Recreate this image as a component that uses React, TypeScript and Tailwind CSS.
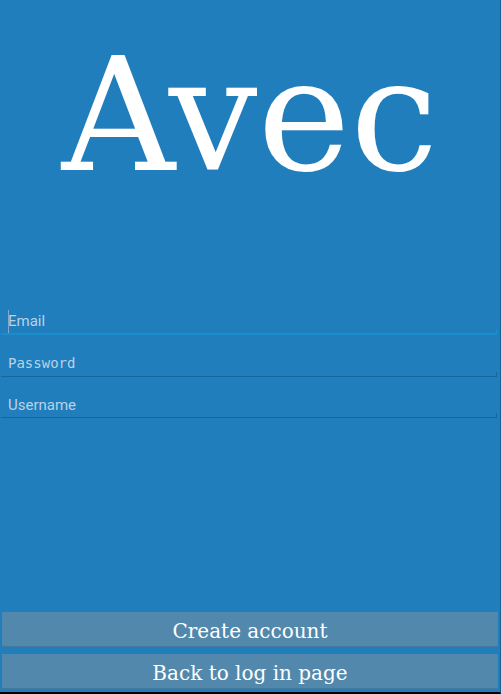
function Tick({ color }: { color: string }) {
  return <span className={`absolute right-0 bottom-0 h-[4px] w-[1px] ${color}`} />;
}

export default function App() {
  return (
    <div className="w-[501px] h-[694px] bg-[#207ebd] flex flex-col border-r border-r-[#1a5f8f] border-b-2 border-b-black overflow-hidden">
      <h1 className="text-center text-white text-[157px] leading-none pt-[37px] h-[305px] [font-family:'DejaVu_Serif',serif]">
        Avec
      </h1>

      <div className="flex flex-col">
        <div className="relative h-[30px] ml-[1px] mr-[3px] border-b-2 border-b-[#1a8dcc] flex items-end pb-[1px]">
          <span className="absolute left-[7px] top-[5px] h-[23px] w-[1px] bg-[#7fa9cc]" />
          <span className="pl-[7px] text-[15px] text-[#b9d2e6] [font-family:Roboto,sans-serif]">Email</span>
          <Tick color="bg-[#1a8dcc]" />
        </div>
        <div className="relative h-[42px] ml-[1px] mr-[3px] border-b border-b-[#1b649b] flex items-end pb-[2px]">
          <span className="pl-[7px] text-[14px] text-[#b9d2e6] [font-family:'DejaVu_Sans_Mono',monospace]">Password</span>
          <Tick color="bg-[#1b649b]" />
        </div>
        <div className="relative h-[41px] ml-[1px] mr-[3px] border-b border-b-[#1b649b] flex items-end pb-[1px]">
          <span className="pl-[7px] text-[15px] text-[#b9d2e6] [font-family:Roboto,sans-serif]">Username</span>
          <Tick color="bg-[#1b649b]" />
        </div>
      </div>

      <div className="flex-1" />

      <div className="flex flex-col gap-[7px] px-[2px] pb-[3px]">
        <button className="h-[35px] w-full bg-[#5388ad] border-b border-b-[#45789d] text-white text-[20px] pt-[3px] [font-family:'DejaVu_Serif',serif]">
          Create account
        </button>
        <button className="h-[35px] w-full bg-[#5388ad] border-b border-b-[#45789d] text-white text-[20px] pt-[3px] [font-family:'DejaVu_Serif',serif]">
          Back to log in page
        </button>
      </div>
    </div>
  );
}
